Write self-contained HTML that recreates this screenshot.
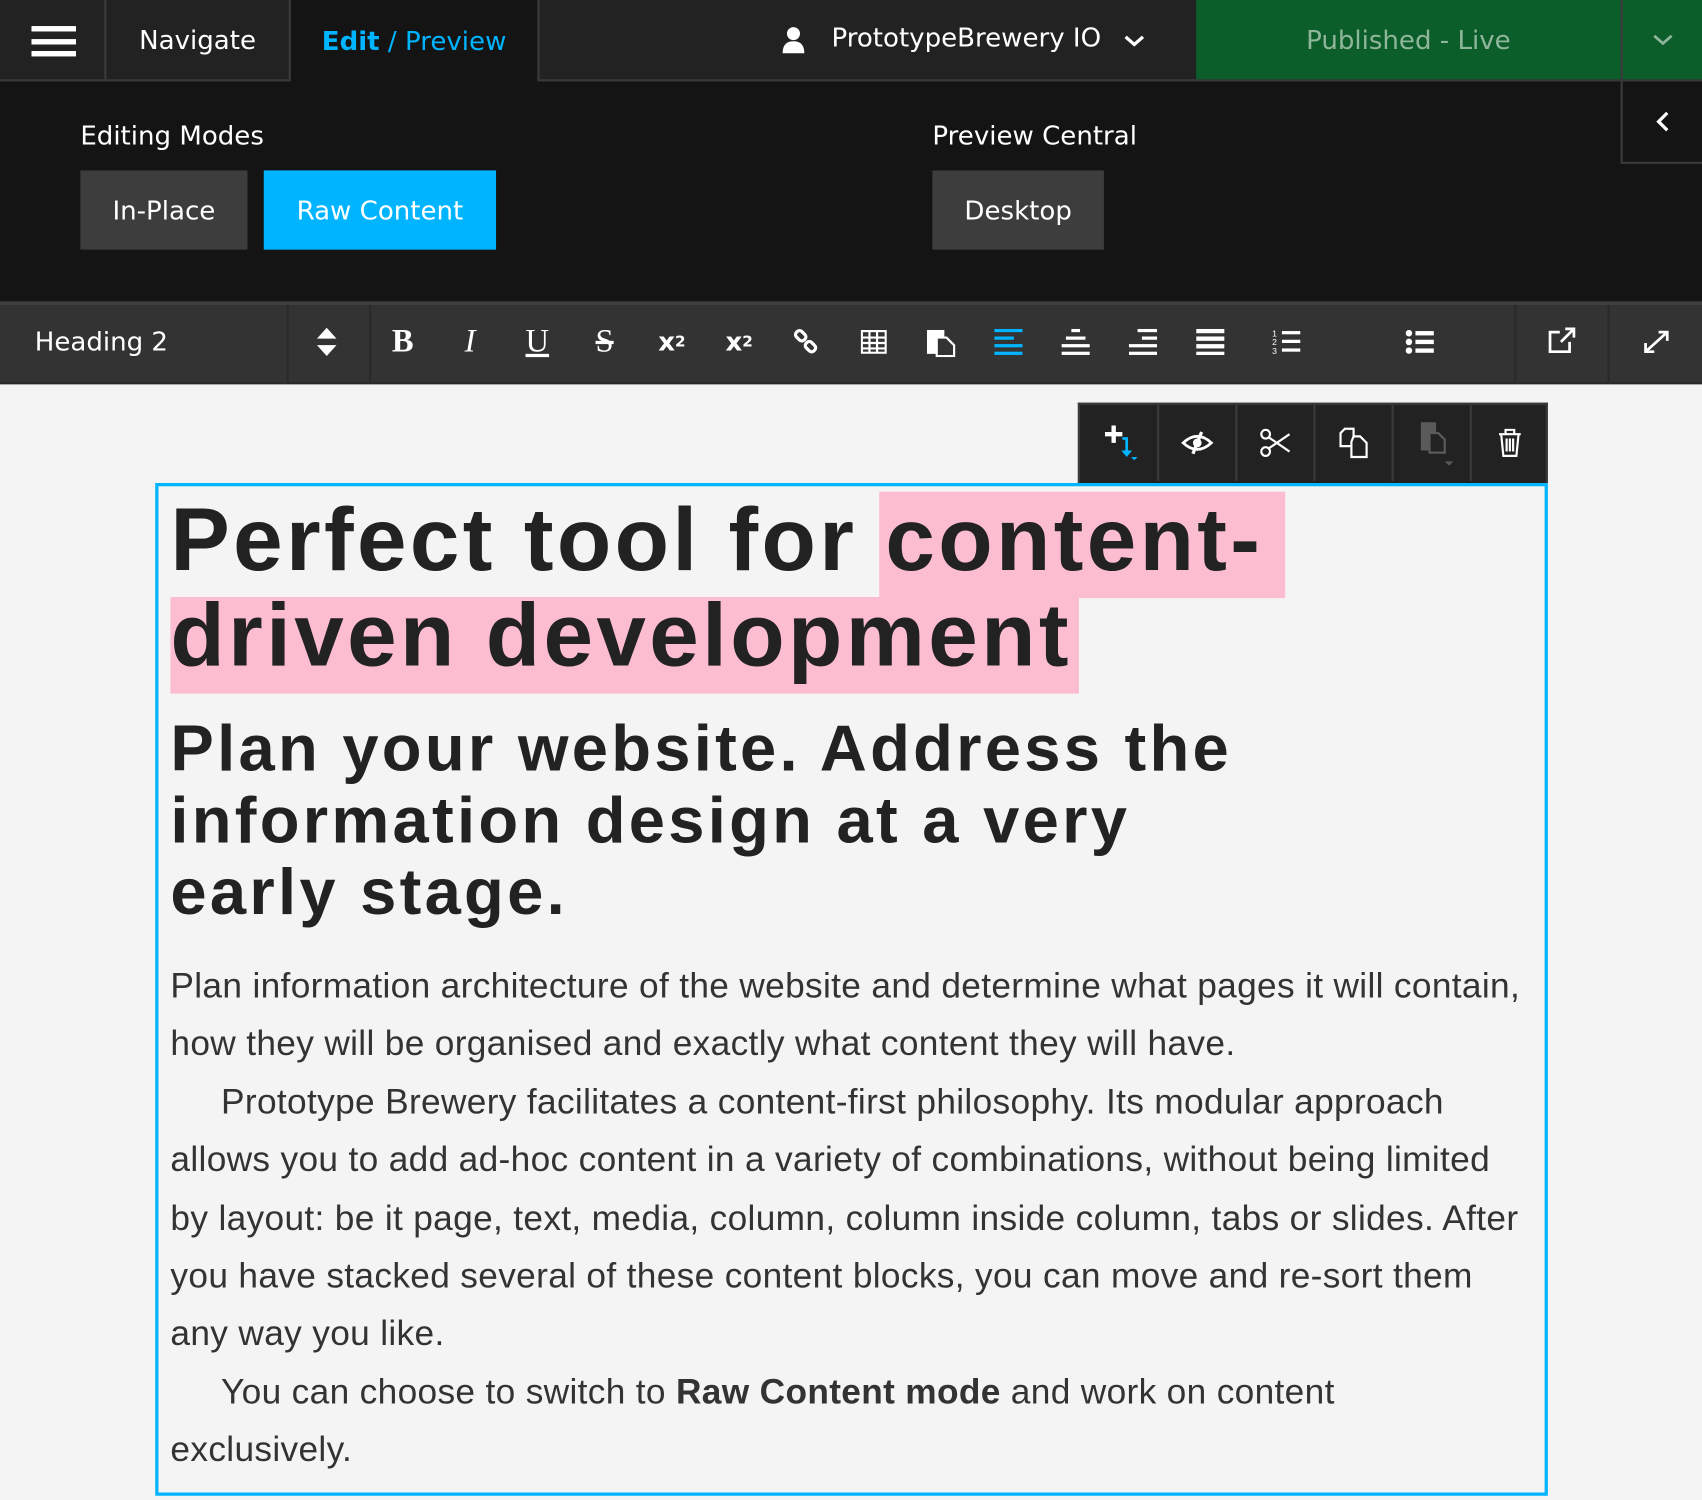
<!DOCTYPE html>
<html><head><meta charset="utf-8"><style>
*{box-sizing:border-box;margin:0;padding:0}
html,body{width:1702px;height:1500px;overflow:hidden;background:#f4f4f4}
#w{position:absolute;left:0;top:0;width:1568px;height:1382px;transform:scale(1.08546);transform-origin:0 0;font-family:"Liberation Sans",sans-serif;background:#f4f4f4}
.a{position:absolute}
.ui{font-family:"DejaVu Sans","Liberation Sans",sans-serif;color:#fff;font-size:24px}
.c{display:flex;align-items:center;justify-content:center}
.ic{position:absolute;top:295px;width:40px;height:40px;margin-left:-20px;display:flex;align-items:center;justify-content:center;color:#fff;font-family:"Liberation Serif",serif;font-size:30px}
.bt{position:absolute;top:373px;width:71px;height:70px;border-left:2px solid #3a3a3a;display:flex;align-items:center;justify-content:center}
</style></head><body><div id="w">
<div class="a" style="left:0;top:0;width:1568px;height:75px;background:#222;border-bottom:2px solid #3a3a3a"></div>
<div class="a" style="left:0;top:0;width:98px;height:73px;border-right:2px solid #3a3a3a"></div>
<div class="a" style="left:29px;top:24px;width:41px;height:5px;background:#fff;box-shadow:0 12px 0 #fff,0 23px 0 #fff"></div>
<div class="a ui c" style="left:98px;top:0;width:170px;height:73px;border-right:2px solid #3a3a3a;font-size:24px">Navigate</div>
<div class="a ui c" style="left:268px;top:0;width:229px;height:76px;background:#141414;border-right:2px solid #3a3a3a;font-size:24px;color:#00b4ff"><b style="font-weight:600">Edit</b>&nbsp;/ Preview</div>
<svg class="a" style="left:720px;top:24px" width="22" height="26" viewBox="0 0 22 26"><circle cx="11" cy="7" r="6" fill="#fff"/><path d="M1 25 Q1 14 11 14 Q21 14 21 25Z" fill="#fff"/></svg>
<div class="a ui" style="left:766px;top:21px;font-size:24px">PrototypeBrewery IO</div>
<svg class="a" style="left:1034px;top:31px" width="22" height="14"><path d="M3 3 L11 10 L19 3" stroke="#fff" stroke-width="3" fill="none"/></svg>
<div class="a ui c" style="left:1102px;top:0;width:391px;height:73px;background:#0b5e2a;color:#8fb59a;font-size:24px">Published - Live</div>
<div class="a c" style="left:1493px;top:0;width:75px;height:73px;background:#0b5e2a;border-left:2px solid #3a3a3a"><svg width="22" height="14"><path d="M3 3 L11 10 L19 3" stroke="#8fb59a" stroke-width="2.5" fill="none"/></svg></div>
<div class="a" style="left:0;top:75px;width:1568px;height:203px;background:#141414"></div>
<div class="a" style="left:268px;top:73px;width:227px;height:4px;background:#141414"></div>
<div class="a c" style="left:1493px;top:75px;width:75px;height:76px;border-left:2px solid #3a3a3a;border-bottom:2px solid #3a3a3a"><svg width="16" height="22"><path d="M12 3 L4 11 L12 19" stroke="#fff" stroke-width="3" fill="none"/></svg></div>
<div class="a ui" style="left:74px;top:111px;font-size:24px">Editing Modes</div>
<div class="a ui c" style="left:74px;top:157px;width:154px;height:73px;background:#3d3d3d;font-size:24px">In-Place</div>
<div class="a ui c" style="left:243px;top:157px;width:214px;height:73px;background:#00b4ff;font-size:24px">Raw Content</div>
<div class="a ui" style="left:859px;top:111px;font-size:24px">Preview Central</div>
<div class="a ui c" style="left:859px;top:157px;width:158px;height:73px;background:#3d3d3d;font-size:24px">Desktop</div>
<div class="a" style="left:0;top:278px;width:1568px;height:76px;background:#333;border-top:3px solid #3f3f3f;border-bottom:2px solid #2a2a2a"></div>
<div class="a" style="left:264px;top:281px;width:2px;height:71px;background:#2a2a2a"></div>
<div class="a" style="left:340px;top:281px;width:2px;height:71px;background:#2a2a2a"></div>
<div class="a" style="left:1395px;top:281px;width:2px;height:71px;background:#2a2a2a"></div>
<div class="a" style="left:1481px;top:281px;width:2px;height:71px;background:#2a2a2a"></div>
<div class="a ui" style="left:32px;top:301px;font-size:24px">Heading 2</div>
<svg class="a" style="left:290px;top:300px" width="22" height="30"><path d="M2 12 L11 2 L20 12Z M2 18 L11 28 L20 18Z" fill="#fff"/></svg>
<div class="ic" style="left:371px;font-weight:bold">B</div>
<div class="ic" style="left:433px;font-style:italic">I</div>
<div class="ic" style="left:495px;text-decoration:underline">U</div>
<div class="ic" style="left:557px;text-decoration:line-through">S</div>
<div class="ic" style="left:619px;font-size:24px;font-weight:bold;font-family:'DejaVu Sans'">x<sub style="font-size:14px">2</sub></div>
<div class="ic" style="left:681px;font-size:24px;font-weight:bold;font-family:'DejaVu Sans'">x<sup style="font-size:14px">2</sup></div>
<svg class="a" style="left:731px;top:303px" width="24" height="24"><g fill="none" stroke="#fff" stroke-width="3"><rect x="2" y="3" width="10" height="7" rx="3" transform="rotate(45 7 6)"/><rect x="11" y="13" width="10" height="7" rx="3" transform="rotate(45 16 16)"/></g></svg>
<svg class="a" style="left:793px;top:304px" width="24" height="22"><g fill="none" stroke="#fff" stroke-width="2"><rect x="1" y="1" width="22" height="20"/><path d="M1 7H23M1 12H23M1 17H23M8 1V21M15 1V21"/></g></svg>
<svg class="a" style="left:853px;top:301px" width="28" height="28"><rect x="1" y="3" width="16" height="22" fill="#fff"/><path d="M10 10H19L26 17V27H10Z" fill="#333" stroke="#fff" stroke-width="2"/></svg>
<svg class="a" style="left:916px;top:303px" width="26" height="24"><g fill="#00b4ff"><rect y="0" width="26" height="3"/><rect y="7" width="18" height="3"/><rect y="14" width="26" height="3"/><rect y="21" width="26" height="3"/></g></svg>
<svg class="a" style="left:978px;top:303px" width="26" height="24"><g fill="#fff"><rect x="9" y="0" width="8" height="3"/><rect x="4" y="7" width="18" height="3"/><rect y="14" width="26" height="3"/><rect y="21" width="26" height="3"/></g></svg>
<svg class="a" style="left:1040px;top:303px" width="26" height="24"><g fill="#fff"><rect x="8" y="0" width="18" height="3"/><rect x="12" y="7" width="14" height="3"/><rect y="14" width="26" height="3"/><rect y="21" width="26" height="3"/></g></svg>
<svg class="a" style="left:1102px;top:303px" width="26" height="24"><g fill="#fff"><rect y="0" width="26" height="4"/><rect y="7" width="26" height="4"/><rect y="14" width="26" height="4"/><rect y="21" width="26" height="4"/></g></svg>
<svg class="a" style="left:1172px;top:302px" width="26" height="26"><g fill="#fff"><rect x="9" y="3" width="17" height="3"/><rect x="9" y="11" width="17" height="3"/><rect x="9" y="19" width="17" height="3"/><text x="0" y="8" font-size="8" fill="#fff">1</text><text x="0" y="16" font-size="8" fill="#fff">2</text><text x="0" y="24" font-size="8" fill="#fff">3</text></g></svg>
<svg class="a" style="left:1295px;top:304px" width="26" height="22"><g fill="#fff"><circle cx="3" cy="3" r="3"/><circle cx="3" cy="11" r="3"/><circle cx="3" cy="19" r="3"/><rect x="9" y="1" width="17" height="4"/><rect x="9" y="9" width="17" height="4"/><rect x="9" y="17" width="17" height="4"/></g></svg>
<svg class="a" style="left:1425px;top:301px" width="28" height="26"><g fill="none" stroke="#fff" stroke-width="2.5"><path d="M12 5H3V23H21V14"/><path d="M13 14L25 2M17 2H25V10"/></g></svg>
<svg class="a" style="left:1513px;top:303px" width="26" height="24"><g fill="none" stroke="#fff" stroke-width="2.5"><path d="M3 21L23 3M15 3H23V11M3 13V21H11"/></g></svg>
<div class="a" style="left:993px;top:371px;width:433px;height:74px;background:#222;border:2px solid #3a3a3a;border-bottom:none"></div>
<div class="bt" style="left:994px;border-left:none"><svg width="40" height="40"><path d="M8 10H14V4H18V10H24V14H18V20H14V14H8Z" fill="#fff"/><path d="M24 16H28V28" stroke="#00b4ff" stroke-width="2.5" fill="none"/><path d="M23 27H33L28 33Z M32 33H38L35 36Z" fill="#00b4ff"/></svg></div>
<div class="bt" style="left:1066px"><svg width="30" height="24"><path d="M2 12Q15 0 28 12Q15 24 2 12Z" fill="none" stroke="#fff" stroke-width="2.5"/><circle cx="15" cy="12" r="4" fill="#fff"/><path d="M19 2L11 22" stroke="#fff" stroke-width="3"/></svg></div>
<div class="bt" style="left:1138px"><svg width="30" height="28"><g fill="none" stroke="#fff" stroke-width="2"><circle cx="6" cy="6" r="4"/><circle cx="6" cy="22" r="4"/><path d="M9 9L28 22M9 19L28 6"/></g></svg></div>
<div class="bt" style="left:1210px"><svg width="28" height="30"><g fill="#222" stroke="#fff" stroke-width="2"><path d="M6 2H14V18H2V6Z"/><path d="M14 9H20L26 15V28H12V14Z"/></g></svg></div>
<div class="bt" style="left:1282px"><svg width="40" height="50"><rect x="10" y="6" width="14" height="26" fill="#5a5a5a"/><path d="M18 16H26L32 22V34H18Z" fill="#222" stroke="#5a5a5a" stroke-width="2"/><path d="M32 42H40L36 46Z" fill="#5a5a5a"/></svg></div>
<div class="bt" style="left:1354px"><svg width="22" height="26"><g fill="none" stroke="#fff" stroke-width="2"><path d="M1 5H21M7 5V1H15V5M3 5L5 25H17L19 5M8 9V21M11 9V21M14 9V21"/></g></svg></div>
<div class="a" style="left:143px;top:445px;width:1283px;height:933px;border:3px solid #00b4ff"></div>
<div class="a" style="left:810px;top:453px;width:374px;height:98px;background:#fdbdd0"></div>
<div class="a" style="left:157px;top:550px;width:837px;height:89px;background:#fdbdd0"></div>
<div class="a" style="left:157px;top:454px;font-weight:bold;font-size:82px;line-height:88px;color:#222;white-space:nowrap;letter-spacing:3.1px">Perfect tool for content-<br>driven development</div>
<div class="a" style="left:157px;top:657px;font-weight:bold;font-size:60px;line-height:66px;color:#222;white-space:nowrap;letter-spacing:3px">Plan your website. Address the<br>information design at a very<br>early stage.</div>
<div class="a" style="left:157px;top:882px;font-size:32.5px;line-height:53.4px;color:#333;white-space:nowrap;letter-spacing:0.3px">Plan information architecture of the website and determine what pages it will contain,<br>how they will be organised and exactly what content they will have.<br>&nbsp;&nbsp;&nbsp;&nbsp;&nbsp;Prototype Brewery facilitates a content-first philosophy. Its modular approach<br>allows you to add ad-hoc content in a variety of combinations, without being limited<br>by layout: be it page, text, media, column, column inside column, tabs or slides. After<br>you have stacked several of these content blocks, you can move and re-sort them<br>any way you like.<br>&nbsp;&nbsp;&nbsp;&nbsp;&nbsp;You can choose to switch to <b>Raw Content mode</b> and work on content<br>exclusively.</div>
</div></body></html>
